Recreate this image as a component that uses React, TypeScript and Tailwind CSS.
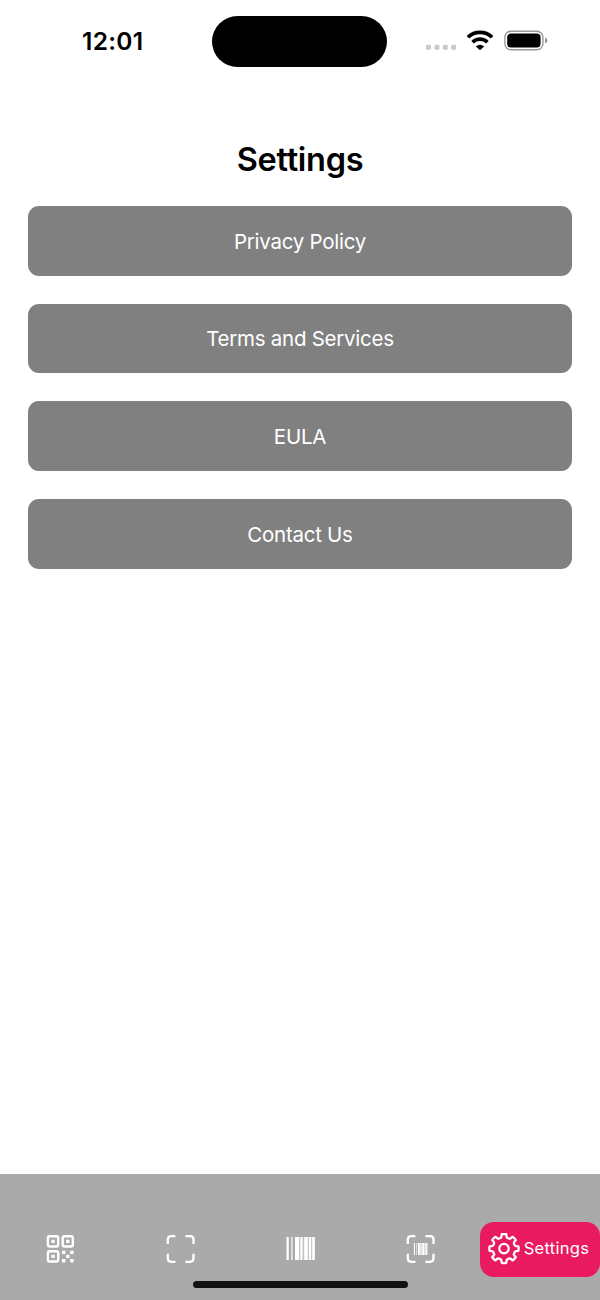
import React, { useState } from 'react';
import type { ReactNode } from 'react';

type TabKey = 'qr' | 'scan' | 'barcode' | 'barcodeScan' | 'settings';

const links = ['Privacy Policy', 'Terms and Services', 'EULA', 'Contact Us'];

// Rounded eight-tooth outline, smoothed through the midpoints of the control polygon
function gearPath(cx: number, cy: number) {
  const pts: [number, number][] = [];
  for (let i = 0; i < 8; i++) {
    const steps = [
      [-18, 11.2],
      [-12, 11.6],
      [-10, 14.5],
      [-7, 14.7],
      [7, 14.7],
      [10, 14.5],
      [12, 11.6],
      [18, 11.2],
    ];
    steps.forEach(([deg, r]) => {
      const a = ((i * 45 + deg - 90) * Math.PI) / 180;
      pts.push([cx + r * Math.cos(a), cy + r * Math.sin(a)]);
    });
  }
  const mid = (a: [number, number], b: [number, number]) =>
    `${((a[0] + b[0]) / 2).toFixed(2)} ${((a[1] + b[1]) / 2).toFixed(2)}`;
  let d = `M${mid(pts[pts.length - 1], pts[0])}`;
  pts.forEach((p, i) => {
    d += `Q${p[0].toFixed(2)} ${p[1].toFixed(2)} ${mid(p, pts[(i + 1) % pts.length])}`;
  });
  return d + 'Z';
}

function QrIcon() {
  return (
    <svg width="28" height="28" viewBox="0 0 28 28" fill="none">
      <g stroke="#fff" strokeWidth="2.4">
        <rect x="1.9" y="1.2" width="10.3" height="10.3" rx="1.8" />
        <rect x="16.7" y="1.2" width="10.1" height="10.3" rx="1.8" />
        <rect x="1.9" y="16.2" width="10.3" height="10.3" rx="1.8" />
      </g>
      <g fill="#fff">
        <rect x="5.4" y="4.7" width="3.3" height="3.3" />
        <rect x="20.1" y="4.7" width="3.3" height="3.3" />
        <rect x="5.4" y="19.7" width="3.3" height="3.3" />
        <rect x="16" y="15.7" width="3.4" height="3.4" />
        <rect x="24.2" y="15.7" width="3.4" height="3.4" />
        <rect x="20.1" y="19.8" width="3.4" height="3.4" />
        <rect x="16" y="24" width="3.4" height="3.4" />
        <rect x="24.2" y="24" width="3.4" height="3.4" />
      </g>
    </svg>
  );
}

function ScanIcon({ children }: { children?: ReactNode }) {
  return (
    <svg width="30" height="28" viewBox="0 0 30 28" fill="none">
      <path
        d="M2.8 9V4.7Q2.8 1.2 6.3 1.2H10.4M20.4 1.2H25Q28.5 1.2 28.5 4.7V9M28.5 18.8V23.3Q28.5 26.8 25 26.8H20.4M10.4 26.8H6.3Q2.8 26.8 2.8 23.3V18.8"
        stroke="#fff"
        strokeWidth="2.3"
      />
      {children}
    </svg>
  );
}

function Bars() {
  return (
    <g fill="#fff">
      <rect x="0" width="2.3" height="23" />
      <rect x="4.8" width="1.2" height="23" />
      <rect x="8.5" width="4" height="23" />
      <rect x="13.8" width="2.2" height="23" />
      <rect x="17.7" width="3.6" height="23" />
      <rect x="22.5" width="2.1" height="23" />
      <rect x="25.7" width="2.6" height="23" />
      <rect x="8.5" width="19.8" height="23" opacity="0.3" />
    </g>
  );
}

function BarcodeIcon() {
  return (
    <svg width="29" height="23" viewBox="-0.5 0 29 23">
      <Bars />
    </svg>
  );
}

function BarcodeScanIcon() {
  return (
    <ScanIcon>
      <g transform="translate(8.9 8) scale(0.475 0.52)">
        <Bars />
      </g>
    </ScanIcon>
  );
}

function GearIcon() {
  return (
    <svg width="32" height="32" viewBox="0 0 32 32" fill="none" stroke="#fff" strokeWidth="2.3">
      <path d={gearPath(16, 15.6)} strokeLinejoin="round" />
      <circle cx="16" cy="15.6" r="4.7" />
    </svg>
  );
}

const tabs: { key: TabKey; label: string; icon: ReactNode }[] = [
  { key: 'qr', label: 'QR Code', icon: <QrIcon /> },
  { key: 'scan', label: 'Scan', icon: <ScanIcon /> },
  { key: 'barcode', label: 'Barcode', icon: <BarcodeIcon /> },
  { key: 'barcodeScan', label: 'Barcode Scan', icon: <BarcodeScanIcon /> },
  { key: 'settings', label: 'Settings', icon: <GearIcon /> },
];

function StatusBar() {
  return (
    <header className="flex h-[83px] items-start pt-[16px]">
      <div className="w-[212.4px] pl-[82px] pt-[10px] text-[24.5px] leading-[31px] font-semibold tracking-[0.3px]">
        12:01
      </div>
      <div className="h-[51px] w-[175px] rounded-full bg-black" />
      <div className="flex pl-[38.6px] pt-[13px]">
        <svg width="124" height="24" viewBox="0 0 124 24">
          <g fill="#cacaca">
            <rect x="0" y="15.8" width="5" height="5" rx="1.2" />
            <rect x="8.5" y="15.8" width="5" height="5" rx="1.2" />
            <rect x="16.8" y="15.8" width="5" height="5" rx="1.2" />
            <rect x="25.2" y="15.8" width="5" height="5" rx="1.2" />
          </g>
          <g fill="none" stroke="#000" strokeWidth="3.7">
            <path d="M41.9 8.3A17.3 17.3 0 0 1 66.1 8.3" />
            <path d="M46.6 13.2A10.6 10.6 0 0 1 61.4 13.2" />
          </g>
          <path d="M54 21.3L49.9 17.4Q54 13.9 58.1 17.4Z" />
          <rect x="78.9" y="2.2" width="38" height="18.6" rx="6" fill="none" stroke="#999" strokeWidth="1.4" />
          <rect x="81.2" y="4.6" width="33.4" height="13.8" rx="4" />
          <path d="M119.1 8.5Q121.5 9.2 121.5 11.5T119.1 14.5Z" fill="#999" />
        </svg>
      </div>
    </header>
  );
}

export default function App() {
  const [active, setActive] = useState<TabKey>('settings');

  return (
    <div className="flex h-[1300px] w-[600px] flex-col overflow-hidden bg-white font-[Inter,'Liberation_Sans',sans-serif] text-black">
      <StatusBar />

      <main className="flex-1 px-7 pt-[55px]">
        <h1 className="text-center text-[32.5px] leading-[44px] font-semibold tracking-[-0.3px]">Settings</h1>
        <div className="mt-[24.3px] flex flex-col gap-[28px]">
          {links.map((label) => (
            <button
              key={label}
              className="h-[69.6px] w-full rounded-[11px] bg-[#808080] pt-[2px] text-[20.5px] tracking-[-0.26px] text-white"
            >
              {label}
            </button>
          ))}
        </div>
      </main>

      <footer className="flex h-[126px] flex-col bg-[#aaaaaa] pt-[47.5px]">
        <nav className="grid h-[55.5px] grid-cols-5">
          {tabs.map((tab) => (
            <button
              key={tab.key}
              aria-label={tab.label}
              onClick={() => setActive(tab.key)}
              className={
                active === tab.key
                  ? 'flex items-center justify-center gap-1 rounded-[14px] bg-[#e91a60] pr-[3px] pb-[1px] text-[16.5px] tracking-[0.3px] text-white'
                  : 'flex items-center justify-center pb-[1px]'
              }
            >
              {tab.icon}
              {active === tab.key && <span>{tab.label}</span>}
            </button>
          ))}
        </nav>
        <div className="mx-auto mt-[4px] h-[7px] w-[215px] rounded-full bg-[#121212]" />
      </footer>
    </div>
  );
}
